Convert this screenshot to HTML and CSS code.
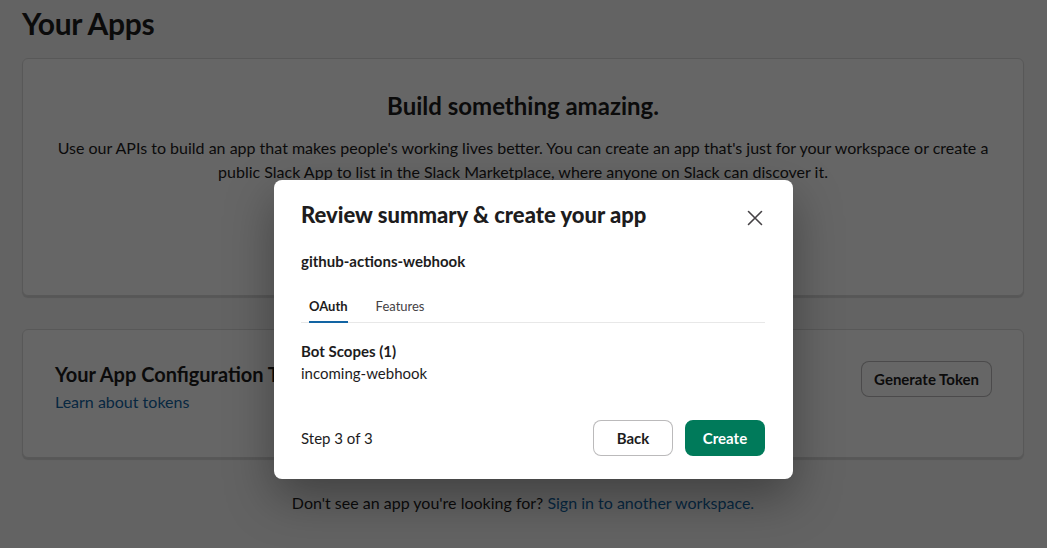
FILE: index.html
```html
<!DOCTYPE html>
<html lang="en">
<head>
    <meta charset="UTF-8">
    <meta name="viewport" content="width=device-width, initial-scale=1.0">
    <title>Your Apps</title>
    <link rel="stylesheet" href="styles.css">
</head>
<body>
    <div class="page">
        <h1 class="page-title">Your Apps</h1>

        <div class="card intro-card">
            <h2 class="intro-title">Build something amazing.</h2>
            <p class="intro-text">
                Use our APIs to build an app that makes people's working lives better. You can create an app that's just for your workspace or create a public Slack App to list in the Slack Marketplace, where anyone on Slack can discover it.
            </p>
        </div>

        <div class="card token-card">
            <div class="token-info">
                <h3 class="token-title">Your App Configuration Tokens</h3>
                <a class="link" href="#">Learn about tokens</a>
            </div>
            <button class="btn btn-outline">Generate Token</button>
        </div>

        <p class="footer-note">
            Don't see an app you're looking for? <a class="link" href="#">Sign in to another workspace.</a>
        </p>
    </div>

    <div class="overlay"></div>

    <div class="modal">
        <div class="modal-header">
            <h2 class="modal-title">Review summary &amp; create your app</h2>
            <button class="close-btn" aria-label="Close">
                <svg width="16" height="16" viewBox="0 0 16 16">
                    <path d="M1.5 1.5 L14.5 14.5 M14.5 1.5 L1.5 14.5" stroke="#454245" stroke-width="1.6" fill="none" stroke-linecap="round"/>
                </svg>
            </button>
        </div>

        <div class="modal-body">
            <div class="app-name">github-actions-webhook</div>

            <div class="tabs">
                <div class="tab active">OAuth</div>
                <div class="tab">Features</div>
            </div>

            <div class="scopes">
                <div class="scopes-title">Bot Scopes (1)</div>
                <div class="scope-item">incoming-webhook</div>
            </div>
        </div>

        <div class="modal-footer">
            <span class="step">Step 3 of 3</span>
            <div class="modal-actions">
                <button class="btn btn-back">Back</button>
                <button class="btn btn-primary">Create</button>
            </div>
        </div>
    </div>
</body>
</html>
```

FILE: styles.css
```css
* {
    margin: 0;
    padding: 0;
    box-sizing: border-box;
}

body {
    font-family: Lato, 'Noto Sans', sans-serif;
    background-color: #f8f8f8;
    color: #1d1c1d;
    width: 1047px;
    height: 548px;
    overflow: hidden;
    position: relative;
}

.page {
    padding: 0 23px 0 22px;
}

.page-title {
    font-size: 30px;
    font-weight: 700;
    line-height: 46px;
    margin-bottom: 12px;
    letter-spacing: -0.3px;
}

.card {
    background: white;
    border: 1px solid #dddddd;
    border-radius: 6px;
    box-shadow: 0 2px 1px rgba(0, 0, 0, 0.12);
}

.intro-card {
    height: 238px;
    padding: 31px 32px;
    text-align: center;
    margin-bottom: 33px;
}

.intro-title {
    font-size: 24px;
    font-weight: 700;
    line-height: 32px;
    margin-bottom: 14px;
}

.intro-text {
    font-size: 16px;
    line-height: 24px;
}

.token-card {
    height: 129px;
    display: flex;
    justify-content: space-between;
    align-items: flex-start;
    padding: 30px 32px 0;
    margin-bottom: 33px;
}

.token-info {
    display: flex;
    flex-direction: column;
}

.token-title {
    font-size: 20px;
    font-weight: 700;
    line-height: 28px;
}

.link {
    color: #1264a3;
    text-decoration: none;
    font-size: 16px;
    line-height: 24px;
}

.token-info .link {
    margin-top: 2px;
}

.footer-note {
    text-align: center;
    font-size: 16px;
    line-height: 24px;
    color: #1d1c1d;
}

.btn {
    font-family: Lato, 'Noto Sans', sans-serif;
    font-size: 15px;
    font-weight: 700;
    height: 36px;
    border-radius: 8px;
    padding: 0 12px;
    cursor: pointer;
}

.btn-outline {
    background: white;
    color: #1d1c1d;
    border: 1px solid rgba(29, 28, 29, 0.3);
    margin-top: 1px;
    margin-right: -1px;
}

.overlay {
    position: absolute;
    inset: 0;
    background: rgba(0, 0, 0, 0.6);
}

.modal {
    position: absolute;
    left: 274px;
    top: 180px;
    width: 519px;
    height: 299px;
    background: white;
    border-radius: 8px;
    box-shadow: 0 18px 48px rgba(0, 0, 0, 0.35);
    display: flex;
    flex-direction: column;
}

.modal-header {
    display: flex;
    justify-content: space-between;
    align-items: flex-start;
    padding: 20px 24px 0 27px;
}

.modal-title {
    font-size: 22px;
    font-weight: 900;
    line-height: 30px;
}

.close-btn {
    background: none;
    border: none;
    width: 28px;
    height: 28px;
    display: flex;
    align-items: center;
    justify-content: center;
    margin-top: 4px;
}

.modal-body {
    padding: 0 28px 0 27px;
}

.app-name {
    font-size: 15px;
    font-weight: 700;
    line-height: 22px;
    margin-top: 18px;
}

.tabs {
    display: flex;
    gap: 28px;
    margin-top: 21px;
    border-bottom: 1px solid #e8e8e8;
    padding-left: 8px;
}

.tab {
    font-size: 13px;
    line-height: 20px;
    padding: 3px 0 5px;
    color: #454245;
    border-bottom: 2px solid transparent;
    margin-bottom: -1px;
}

.tab.active {
    font-weight: 700;
    color: #1d1c1d;
    border-bottom-color: #1264a3;
}

.scopes {
    margin-top: 17px;
}

.scopes-title {
    font-size: 15px;
    font-weight: 700;
    line-height: 22px;
}

.scope-item {
    font-size: 15px;
    line-height: 22px;
}

.modal-footer {
    margin-top: auto;
    display: flex;
    justify-content: space-between;
    align-items: center;
    padding: 0 28px 23px 27px;
}

.step {
    font-size: 15px;
}

.modal-actions {
    display: flex;
    gap: 12px;
}

.btn-back {
    width: 80px;
    background: white;
    color: #1d1c1d;
    border: 1px solid rgba(29, 28, 29, 0.3);
}

.btn-primary {
    width: 80px;
    background: #007a5a;
    color: white;
    border: none;
}
```
